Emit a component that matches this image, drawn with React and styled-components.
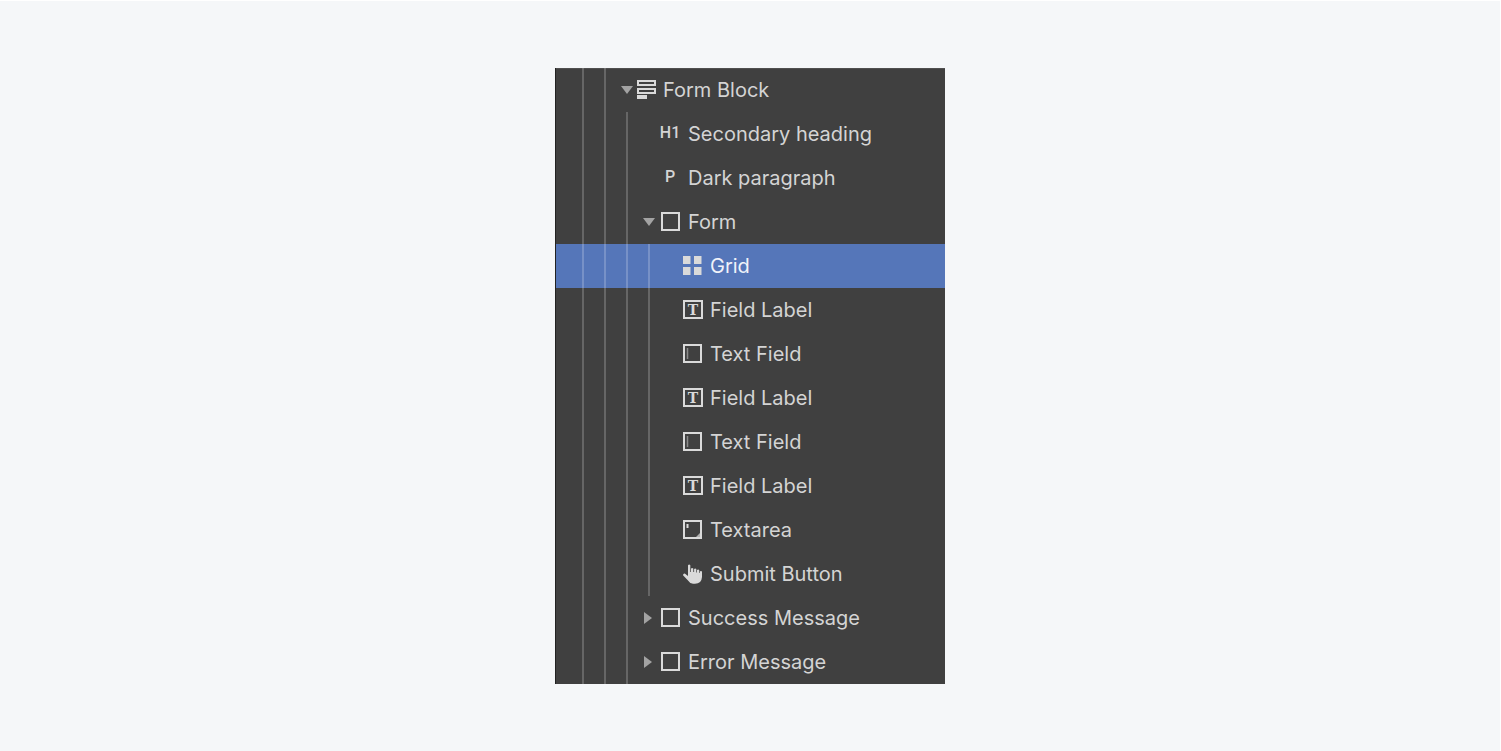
import React, { useState } from "react";
import styled, { createGlobalStyle } from "styled-components";

const GlobalStyle = createGlobalStyle`
  * {
    box-sizing: border-box;
  }

  body {
    margin: 0;
    background: #f5f7f9;
    font-family: Inter, sans-serif;
  }
`;

const Page = styled.main`
  min-height: 100vh;
  display: flex;
  align-items: center;
  justify-content: center;
  border-top: 1px solid #ffffff;
  border-right: 1px solid #ffffff;
`;

const Navigator = styled.ul`
  width: 26%;
  min-width: 340px;
  margin: 0;
  padding: 0;
  list-style: none;
  background: #404040;
  border-left: 1px solid #222222;
  box-shadow: inset 0 1px #505050;
`;

const Row = styled.li`
  display: flex;
  align-items: center;
  height: 44px;
  padding-left: 16px;
  color: ${(props) => (props.$selected ? "#f0f3fa" : "#d4d4d4")};
  background: ${(props) => (props.$selected ? "#5576b9" : "transparent")};
`;

const Guide = styled.span`
  flex: none;
  align-self: stretch;
  width: 22px;

  &::before {
    content: "";
    display: block;
    width: 2px;
    height: 100%;
    margin: 0 auto;
    background: rgba(255, 255, 255, 0.2);
  }
`;

const CaretSlot = styled.span`
  flex: none;
  width: 22px;
`;

const Caret = styled.button`
  display: flex;
  align-items: center;
  justify-content: center;
  width: 22px;
  height: 22px;
  padding: 0;
  border: 0;
  background: none;
  color: #a3a3a3;
  cursor: pointer;
`;

const Label = styled.button`
  display: flex;
  align-items: center;
  gap: 8px;
  padding: 0;
  border: 0;
  background: none;
  color: inherit;
  font: 400 20px/24px Inter, sans-serif;
  white-space: nowrap;
  cursor: pointer;
`;

const IconBox = styled.span`
  display: flex;
  align-items: center;
  justify-content: ${(props) => (props.$narrow ? "flex-start" : "center")};
  width: ${(props) => (props.$narrow ? 17 : 20)}px;
  height: 24px;
`;

const TagIcon = styled.span`
  height: 24px;
  font: 500 16px/22px Roboto, sans-serif;
`;

const Drawing = styled.svg`
  flex: none;
  overflow: visible;
`;

const Svg = ({ children }) => (
  <Drawing
    width="20"
    height="20"
    viewBox="0 0 20 20"
    fill="none"
    stroke="#dadada"
    strokeWidth="2"
    aria-hidden="true"
  >
    {children}
  </Drawing>
);

const icons = {
  formBlock: (
    <Svg>
      <path d="M0 1h17v4H0zM0 9h17v4H0z" />
      <path d="M-1 15h10v4H-1z" fill="#dadada" stroke="none" />
    </Svg>
  ),
  heading: <TagIcon>H1</TagIcon>,
  paragraph: <TagIcon>P</TagIcon>,
  block: (
    <Svg>
      <path d="M2 1h17v17H2z" />
    </Svg>
  ),
  grid: (
    <Svg>
      <path
        d="M1 0h7.500v8H1zM12 0h7.500v8h-7.500zM1 11h7.500v8H1zM12 11h7.500v8h-7.500z"
        fill="#dadada"
        stroke="none"
      />
    </Svg>
  ),
  label: (
    <Svg>
      <path d="M2 1h18v17H2z" />
      <text
        x="11"
        y="15"
        textAnchor="middle"
        fontFamily="DejaVu Serif, serif"
        fontWeight="700"
        fontSize="14"
        fill="#dadada"
        stroke="none"
      >
        T
      </text>
    </Svg>
  ),
  input: (
    <Svg>
      <path d="M2 1h17v17H2z" />
      <path d="M5.500 4v11" stroke="#8a8a8a" strokeWidth="1.500" />
    </Svg>
  ),
  textarea: (
    <Svg>
      <path d="M2 1h17v17H2z" />
      <path d="M5.500 4v4" strokeWidth="2" />
      <path d="M18 13v4h-4z" fill="#b0b0b0" stroke="none" />
    </Svg>
  ),
  submit: (
    <Svg>
      <path
        d="M6 1.200Q7.200 0 8.300 1.200V8h.7V4.500Q10.200 3.300 11.300 4.500V8h.8V5Q13.200 4 14.300 5V8.500h.7V6Q16.200 5 17.200 6V9h.6V7.500Q19 6.500 20 7.500V13Q19.500 19.800 13 19.800H11Q8 19.800 6.500 17L1 11.200Q1 9.500 2.800 9.600L6 12z"
        fill="#dadada"
        stroke="none"
      />
    </Svg>
  ),
};

const tree = [
  {
    name: "Form Block",
    icon: "formBlock",
    children: [
      { name: "Secondary heading", icon: "heading" },
      { name: "Dark paragraph", icon: "paragraph" },
      {
        name: "Form",
        icon: "block",
        children: [
          { name: "Grid", icon: "grid" },
          { name: "Field Label", icon: "label" },
          { name: "Text Field", icon: "input" },
          { name: "Field Label", icon: "label" },
          { name: "Text Field", icon: "input" },
          { name: "Field Label", icon: "label" },
          { name: "Textarea", icon: "textarea" },
          { name: "Submit Button", icon: "submit" },
        ],
      },
      { name: "Success Message", icon: "block", children: [] },
      { name: "Error Message", icon: "block", children: [] },
    ],
  },
];

const flatten = (nodes, open, depth = 2, path = "") =>
  nodes.flatMap((node, i) => {
    const id = `${path}/${i}`;
    const row = { ...node, id, depth };
    return node.children && open[id]
      ? [row, ...flatten(node.children, open, depth + 1, id)]
      : [row];
  });

const App = () => {
  const [open, setOpen] = useState({ "/0": true, "/0/2": true });
  const [selected, setSelected] = useState("/0/2/0");

  const toggle = (id) => setOpen({ ...open, [id]: !open[id] });

  return (
    <>
      <GlobalStyle />
      <Page>
        <Navigator>
          {flatten(tree, open).map((row) => (
            <Row key={row.id} $selected={row.id === selected}>
              {Array.from({ length: row.depth }, (_, i) => (
                <Guide key={i} />
              ))}
              <CaretSlot>
                {row.children && (
                  <Caret
                    aria-label={`Toggle ${row.name}`}
                    aria-expanded={!!open[row.id]}
                    onClick={() => toggle(row.id)}
                  >
                    <svg width="14" height="14" fill="currentColor">
                      <path
                        d={open[row.id] ? "M1 3h12l-6 8z" : "M2 1v12l8-6z"}
                      />
                    </svg>
                  </Caret>
                )}
              </CaretSlot>
              <Label onClick={() => setSelected(row.id)}>
                <IconBox $narrow={row.icon === "formBlock"}>
                  {icons[row.icon]}
                </IconBox>
                {row.name}
              </Label>
            </Row>
          ))}
        </Navigator>
      </Page>
    </>
  );
};

export default App;
